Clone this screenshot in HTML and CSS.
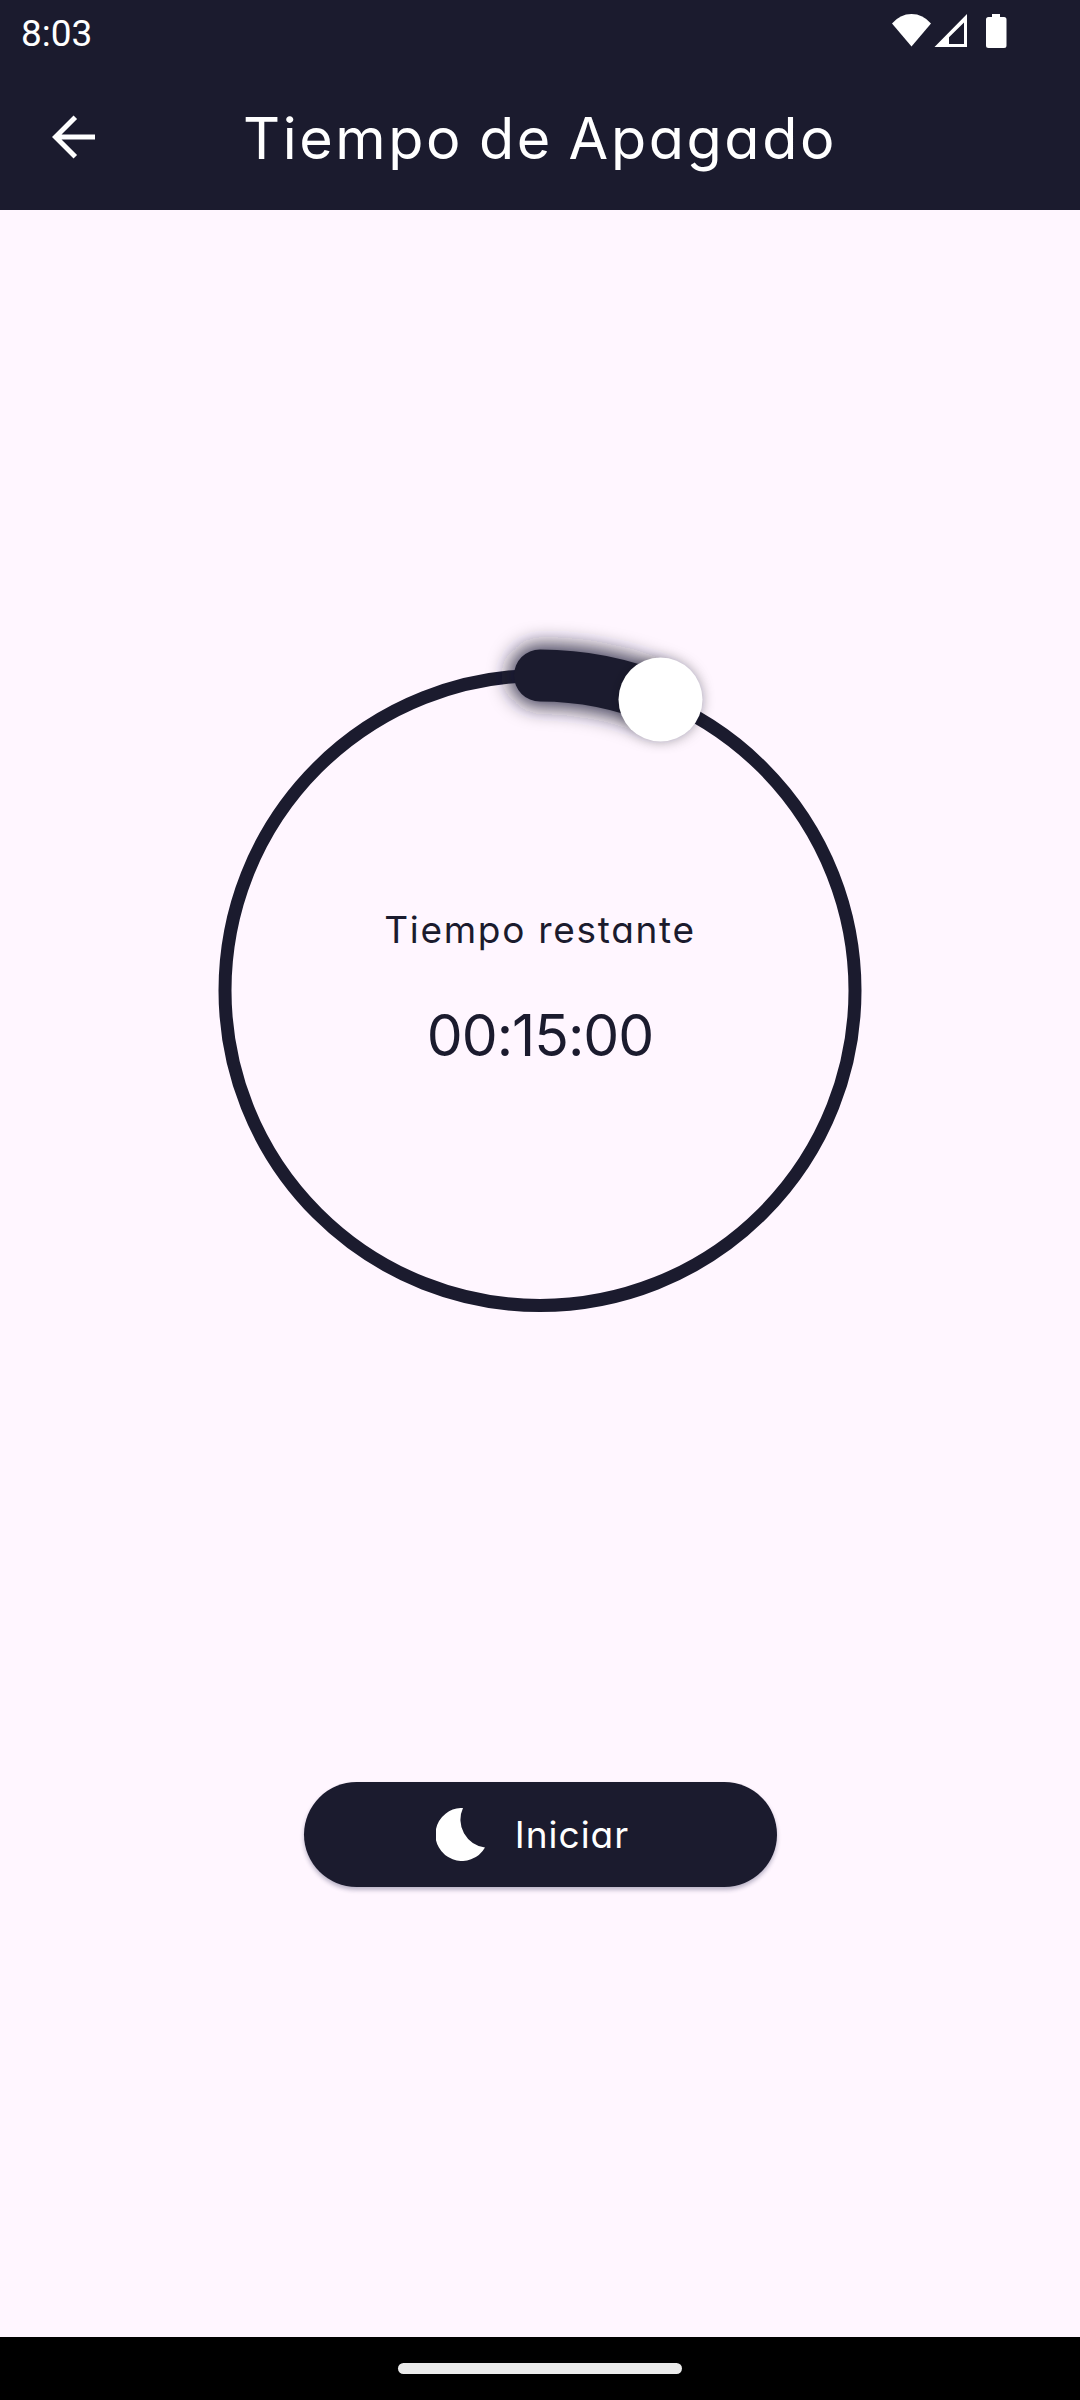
FILE: index.html
```html
<!DOCTYPE html>
<html lang="es">
<head>
<meta charset="utf-8">
<title>Tiempo de Apagado</title>
<link rel="stylesheet" href="styles.css">
</head>
<body>
<header class="top">
  <div class="status">
    <span class="clock">8:03</span>
    <svg class="status-icons" width="120" height="38" viewBox="0 0 120 38" fill="#fff">
      <path d="M0 9.5Q8 0 19.500 0T39 9.500L19.500 32.500Z"/>
      <path fill-rule="evenodd" d="M42.500 33L75 0V33ZM72 8.500L57 23.300V30H72Z"/>
      <path d="M100 0h8v3h4q2.500 0 2.500 2.500v26q0 2.500-2.500 2.500h-15.500q-2.500 0-2.500-2.500v-26q0-2.500 2.500-2.500h3.500z"/>
    </svg>
  </div>
  <div class="bar">
    <svg class="back" width="44" height="44" viewBox="0 0 44 44" fill="none" stroke="#fff" stroke-width="5">
      <path d="M43 22H4M23.300 2.200L3.500 22L23.300 41.800"/>
    </svg>
    <h1 class="title">Tiempo de Apagado</h1>
  </div>
</header>
<main class="content">
  <section class="dial">
    <svg class="ring" width="720" height="720" viewBox="-360 -360 720 720">
      <defs>
        <filter id="glow" filterUnits="userSpaceOnUse" x="-120" y="-420" width="380" height="260"><feGaussianBlur stdDeviation="10"/></filter>
        <filter id="soft" filterUnits="userSpaceOnUse" x="20" y="-400" width="200" height="220"><feGaussianBlur stdDeviation="6"/></filter>
      </defs>
      <circle cy=".5" r="315" fill="none" stroke="#1b1b2e" stroke-width="13"/>
      <path d="M0 -314.500A315 315 0 0 1 120.500 -290.500" fill="none" stroke="#1b1b2e" stroke-opacity=".8" stroke-width="64" stroke-linecap="round" filter="url(#glow)"/>
      <path d="M0 -314.500A315 315 0 0 1 120.500 -290.500" fill="none" stroke="#1b1b2e" stroke-width="52" stroke-linecap="round"/>
      <circle cx="120.500" cy="-290.500" r="42" fill="#000" fill-opacity=".2" filter="url(#soft)"/>
      <circle cx="120.500" cy="-290.500" r="42" fill="#fff"/>
    </svg>
    <div class="readout">
      <p class="label">Tiempo restante</p>
      <p class="time">00:15:00</p>
    </div>
  </section>
  <button class="start" type="button">
    <svg width="53" height="53" viewBox="0 0 53 53" fill="#fff"><path d="M27 0A26.500 26.500 0 1 0 49 39.500A28 28 0 0 1 27 0Z"/></svg>
    <span class="start-text">Iniciar</span>
  </button>
</main>
<footer class="nav"><div class="pill"></div></footer>
</body>
</html>
```
FILE: styles.css
```css
* { box-sizing: border-box; }
body {
  margin: 0;
  height: 2400px;
  display: flex;
  flex-direction: column;
  background: #fff6ff;
  color: #1b1b2e;
  font-family: Inter, "Open Sans", sans-serif;
  font-feature-settings: "cv11";
}
h1, p { margin: 0; font-weight: 400; white-space: nowrap; }
.top { height: 210px; background: #1b1b2e; color: #fff; }
.status {
  height: 64px;
  padding: 14px 68px 0 21px;
  display: flex;
  justify-content: space-between;
}
.clock { font: 37px/39px Roboto, sans-serif; }
.bar {
  height: 146px;
  padding: 0 52px;
  display: grid;
  grid-template-columns: 44px 1fr 44px;
  align-items: center;
}
.title {
  font-size: 57.5px;
  line-height: 68px;
  font-optical-sizing: none;
  letter-spacing: 2.6px;
  word-spacing: -3px;
  text-align: center;
  padding-top: 2px;
}
.content {
  height: 2127px;
  padding-top: 420px;
  display: flex;
  flex-direction: column;
  align-items: center;
}
.dial { display: grid; width: 720px; height: 720px; }
.ring, .readout { grid-area: 1 / 1; }
.ring { overflow: visible; }
.readout {
  display: flex;
  flex-direction: column;
  align-items: center;
  padding-top: 278px;
}
.label { font-size: 37px; line-height: 44px; letter-spacing: 1.7px; }
.time { margin-top: 50px; font-size: 57px; line-height: 68px; letter-spacing: -1px; }
.start {
  width: 473px;
  height: 105px;
  margin-top: 432px;
  padding: 0 15px 0 0;
  border: 0;
  border-radius: 53px;
  display: flex;
  justify-content: center;
  align-items: center;
  gap: 26px;
  background: #1b1b2e;
  color: #fff;
  font: inherit;
  font-feature-settings: "cv11";
  box-shadow: 0 3px 4px rgba(27, 27, 70, .3);
}
.start-text { font-size: 37px; line-height: 44px; letter-spacing: 1px; }
.nav {
  height: 63px;
  display: flex;
  justify-content: center;
  align-items: center;
  background: #000;
}
.pill { width: 284px; height: 11px; border-radius: 6px; background: #ebebeb; }
```
